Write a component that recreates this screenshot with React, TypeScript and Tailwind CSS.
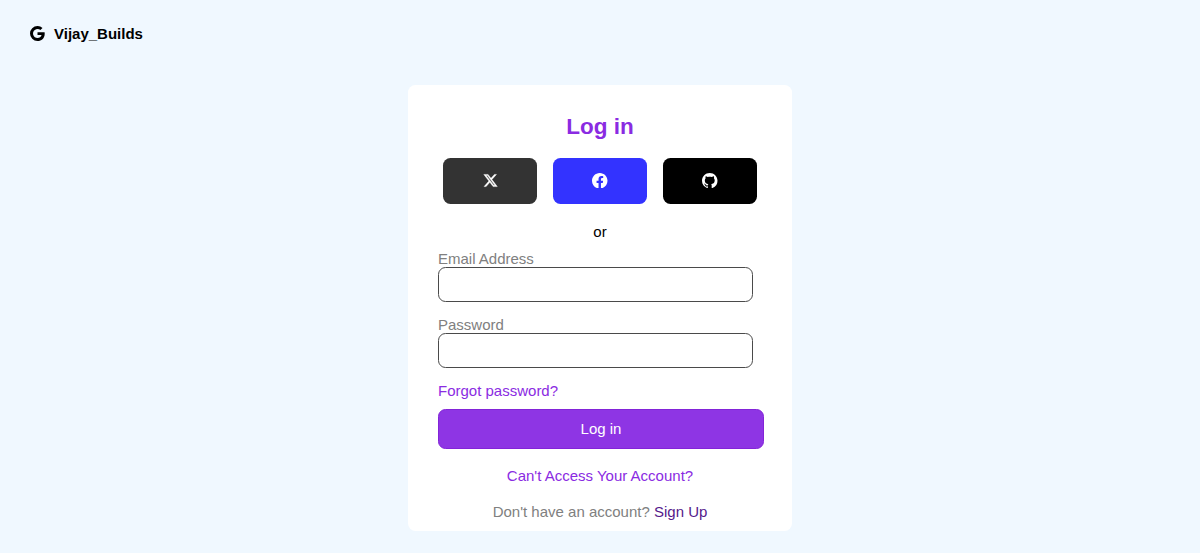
import React from "react";
import { FaXTwitter } from "react-icons/fa6";
import { BsGoogle, BsFacebook, BsGithub } from "react-icons/bs";

function Social({ className, label, children }: { className: string; label: string; children: React.ReactNode }) {
  return (
    <button aria-label={label} className={`flex h-[46px] w-[94px] items-center justify-center rounded-[7.5px] pb-px text-white ${className}`}>
      {children}
    </button>
  );
}

function Field({ id, label, type }: { id: string; label: string; type: string }) {
  return (
    <div className="flex flex-col">
      <label htmlFor={id} className="h-[17px] leading-[17px] text-[#808080]">{label}</label>
      <input id={id} type={type} className="h-[35px] w-[315px] rounded-[7.5px] border border-[#4a4a4a] bg-white px-2 outline-none" />
    </div>
  );
}

export default function App() {
  return (
    <div className="flex h-[553px] flex-col overflow-hidden bg-[#f0f8ff] font-['Liberation_Sans',Arial,sans-serif] text-[15px] text-black">
      <header className="flex h-[85px] items-start pl-[30px] pt-[25px]">
        <BsGoogle className="mt-[0.5px] size-[15px]" />
        <span className="ml-[9px] text-[15px] font-bold leading-[18px]">Vijay_Builds</span>
      </header>
      <main className="mx-auto h-[446px] w-[384px] rounded-[7.5px] bg-white px-[30px]">
        <h1 className="pt-[29px] text-center text-[22.5px] font-bold leading-[26px] text-[#8a2be2]">Log in</h1>
        <div className="mt-[18px] flex justify-center gap-4">
          <Social label="X" className="bg-[#333333]">
            <FaXTwitter className="size-[15px] stroke-current" strokeWidth={14} />
          </Social>
          <Social label="Facebook" className="bg-[#3333ff]"><BsFacebook className="size-[15.5px]" /></Social>
          <Social label="GitHub" className="bg-black"><BsGithub className="size-[15.5px]" /></Social>
        </div>
        <p className="mt-[19px] text-center leading-[17px]">or</p>
        <form className="mt-[10px] flex flex-col gap-[14px]" onSubmit={(e) => e.preventDefault()}>
          <Field id="email" label="Email Address" type="email" />
          <Field id="password" label="Password" type="password" />
          <div className="flex flex-col items-start gap-[10px]">
            <a href="#" className="leading-[17px] text-[#8a2be2]">Forgot password?</a>
            <button className="h-[40px] w-[326px] rounded-[7.5px] border border-[#8324d8] bg-[#8e35e4] text-white">Log in</button>
          </div>
        </form>
        <p className="mt-[18px] text-center leading-[17px] text-[#8a2be2]">Can't Access Your Account?</p>
        <p className="mt-[19px] text-center leading-[17px] text-[#808080]">Don't have an account? <a href="#" className="text-[#551a8b]">Sign Up</a></p>
      </main>
    </div>
  );
}
